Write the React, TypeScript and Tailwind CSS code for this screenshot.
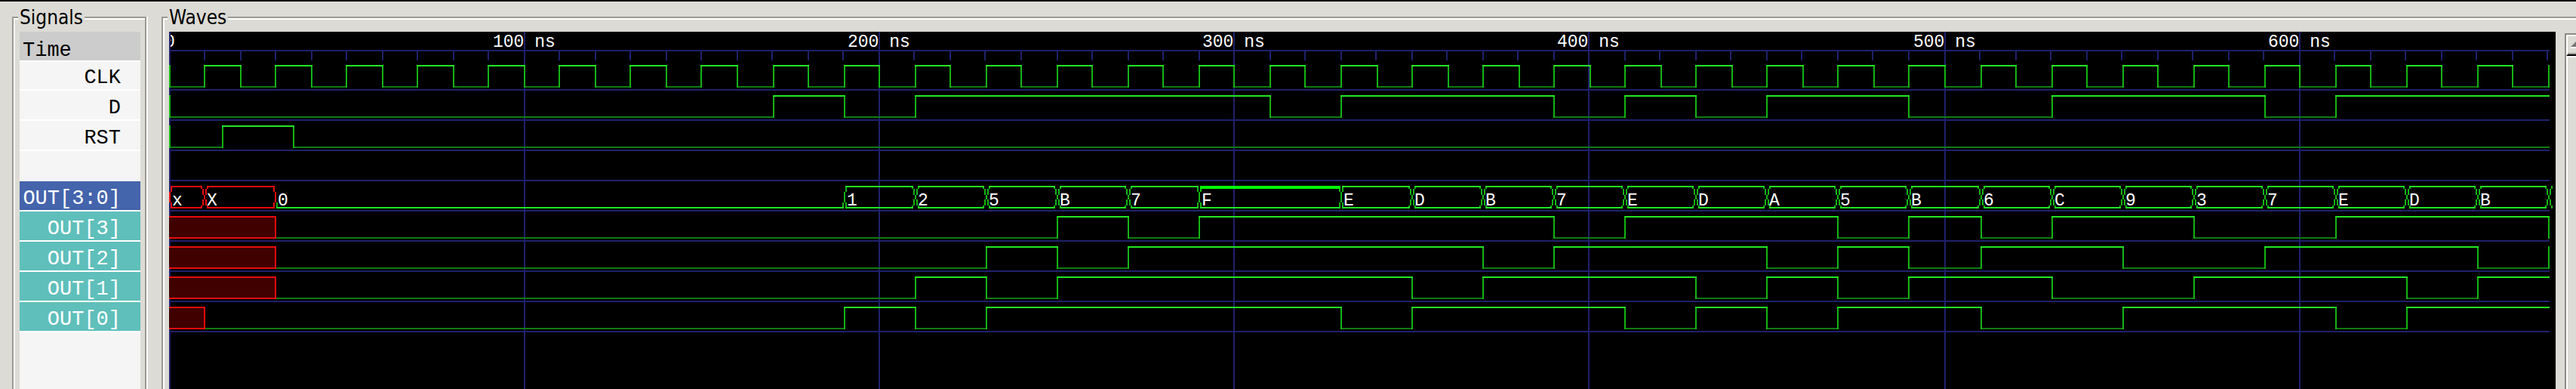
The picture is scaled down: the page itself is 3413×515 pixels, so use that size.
import React from "react";

type Level = 0 | 1;
type Change = [time: number, level: Level];
type BusChange = [time: number, value: string];

const END = 670;
const ROW = 40;
const signalX = (t: number) => 1 + 2 * Math.floor(t * 2.35295);
const tickX = (t: number) => 1 + 2 * Math.floor(t * 2.352);

const clk: Change[] = Array.from({ length: 68 }, (_, i) => [i * 10, (i % 2) as Level]);
const d: Change[] = [
  [0, 0], [170, 1], [190, 0], [210, 1], [310, 0], [330, 1], [390, 0], [410, 1],
  [430, 0], [450, 1], [490, 0], [530, 1], [590, 0], [610, 1],
];
const rst: Change[] = [[0, 0], [15, 1], [35, 0]];

const bus: BusChange[] = [
  [0, "x"], [10, "X"], [30, "0"],
  ...[..."125B7FFEDB7EDA5B6C937EDB7"].map((v, i): BusChange => [190 + i * 20, v]),
].filter((c, i, all) => i === 0 || all[i - 1][1] !== c[1]) as BusChange[];

// Transitions drawn with a tight crossing; the others are two pixels wider on each side.
const tightCrossings = [0, 30, 190, 290, 330];

function bitOf(bit: number, from: number): Change[] {
  const out: Change[] = [[from, 0]];
  for (const [t, v] of bus) {
    if (t < 190) continue;
    const level = ((parseInt(v, 16) >> bit) & 1) as Level;
    if (level !== out[out.length - 1][1]) out.push([t, level]);
  }
  return out;
}

function Wave({ row, changes, start }: { row: number; changes: Change[]; start?: boolean }) {
  const hi = 45 + row * ROW;
  const lo = hi + 28;
  let low = "";
  let high = "";
  let edges = start ? `M1 ${hi - 1}V${lo + 1}` : "";
  changes.forEach(([t, level], i) => {
    const x = signalX(t);
    const next = signalX(i + 1 < changes.length ? changes[i + 1][0] : END);
    if (next > x) {
      const seg = `M${x - 1} ${level ? hi : lo}H${next + 1}`;
      if (level) high += seg;
      else low += seg;
    }
    if (i > 0) edges += `M${x} ${hi - 1}V${lo + 1}`;
  });
  return (
    <g fill="none" strokeWidth={2}>
      <path d={low} stroke="#117a11" />
      <path d={edges} stroke="#14b414" />
      <path d={high} stroke="#22e622" />
    </g>
  );
}

function Unknown({ row, until }: { row: number; until: number }) {
  const x = signalX(until);
  return (
    <path
      d={`M-4 ${45 + row * ROW}H${x}v28H-4z`}
      fill="#400000"
      stroke="#e80c0c"
      strokeWidth={2}
    />
  );
}

// One side of a bus crossing: side is 1 to the right of the edge, -1 to the left.
function strand(t: number, side: 1 | -1, hi: number) {
  const x = signalX(t);
  const near = x + 2 * side;
  const far = x + 4 * side;
  if (tightCrossings.includes(t)) {
    return `M${near} ${hi - 1}v8M${x} ${hi + 7}v14M${near} ${hi + 21}v8`;
  }
  return `M${far} ${hi - 1}v4M${near} ${hi + 3}v8M${x} ${hi + 11}v6M${near} ${hi + 17}v8M${far} ${hi + 25}v4`;
}

function Bus({ row }: { row: number }) {
  const hi = 45 + row * ROW;
  const lo = hi + 28;
  return (
    <g fill="none" strokeWidth={2}>
      {bus.map(([t, v], i) => {
        const last = t >= END;
        const end = last ? t : bus[i + 1][0];
        const x = signalX(t);
        const next = signalX(end);
        const from = x + (tightCrossings.includes(t) ? 1 : 3);
        const to = next - (tightCrossings.includes(end) ? 1 : 3);
        const unknown = v.toLowerCase() === "x";
        const zero = v === "0";
        const line = unknown ? "#e80c0c" : "#22e622";
        const edge = unknown ? "#e80c0c" : "#14b414";
        const opening = zero ? `M${x + 2} ${lo - 7}v8` : strand(t, 1, hi);
        const closing = zero ? `M${next - 2} ${lo - 7}v8` : strand(end, -1, hi);
        return (
          <g key={t}>
            <path d={opening + (last ? "" : closing)} stroke={edge} />
            {!last && <path d={`M${from} ${lo}H${to}`} stroke={line} />}
            {!last && !zero && v !== "F" && <path d={`M${from} ${hi}H${to}`} stroke={line} />}
            {v === "F" && <path d={`M${from} ${hi + 1}H${to}`} stroke="#00ff00" strokeWidth={4} />}
            {!last && (
              <text x={x + 3} y={lo - 3} fill="#ffffff">
                {v}
              </text>
            )}
          </g>
        );
      })}
    </g>
  );
}

function Waveforms() {
  const right = signalX(END) + 1;
  const ticks = Array.from({ length: 67 }, (_, i) => (i + 1) * 10).filter((t) => t % 100 !== 0);
  const marks = [0, 100, 200, 300, 400, 500, 600];
  return (
    <svg
      role="img"
      aria-label="Signal waveforms"
      className="h-full w-full font-['Liberation_Mono',monospace] text-[23px]"
      shapeRendering="crispEdges"
    >
      <g fill="#ffffff">
        {marks.map((t) => (
          <text key={t} x={t === 0 ? -6 : tickX(t) - 42} y={20}>
            {t === 0 ? "0" : `${t} ns`}
          </text>
        ))}
      </g>
      <g stroke="#20206c" strokeWidth={2} fill="none">
        {marks.map((t) => (
          <line key={t} x1={tickX(t)} x2={tickX(t)} y1={0} y2="100%" />
        ))}
        <path d={ticks.map((t) => `M${tickX(t)} 24V38`).join("")} />
        <path d={`M0 25H${right}`} />
        {Array.from({ length: 9 }, (_, i) => (
          <path key={i} d={`M0 ${77 + i * ROW}H${right}`} />
        ))}
      </g>
      <Wave row={0} changes={clk} start />
      <Wave row={1} changes={d} start />
      <Wave row={2} changes={rst} start />
      <Bus row={4} />
      <Wave row={5} changes={bitOf(3, 30)} />
      <Wave row={6} changes={bitOf(2, 30)} />
      <Wave row={7} changes={bitOf(1, 30)} />
      <Wave row={8} changes={bitOf(0, 10)} />
      <Unknown row={5} until={30} />
      <Unknown row={6} until={30} />
      <Unknown row={7} until={30} />
      <Unknown row={8} until={10} />
    </svg>
  );
}

const plain = "h-10 pt-1 bg-[#f5f5f5] text-black";
const teal = "h-10 pt-1 bg-[#5fbfbb] text-white";
const rows = [
  { name: "CLK", style: "h-[38px] pt-0.5 bg-[#f5f5f5] text-black" },
  { name: "D", style: plain },
  { name: "RST", style: plain },
  { name: "", style: plain },
  { name: "OUT[3:0]", style: "h-10 pt-1 bg-[#4464ac] text-white" },
  { name: "OUT[3]", style: teal },
  { name: "OUT[2]", style: teal },
  { name: "OUT[1]", style: teal },
  { name: "OUT[0]", style: teal },
];

const frame = "flex flex-col border-2 border-b-0 border-[#9a9a94]";
const frameInner = "flex min-h-0 flex-1 flex-col border-t-2 border-l-2 border-white pl-1.5";
const title = "-mt-4 -ml-0.5 h-8 self-start bg-[#dcdbd5] px-0.5 text-[26px] leading-[26px]";

export default function App() {
  return (
    <main className="flex h-screen min-h-[460px] overflow-hidden border-t-2 border-black bg-[#dcdbd5] pl-4 font-['DejaVu_Sans_Condensed','DejaVu_Sans',sans-serif] text-black">
      <section className="mt-5 mr-[18px] flex shrink-0 border-r-2 border-white">
        <div className={frame}>
          <div className={`${frameInner} pr-1.5`}>
            <h2 className={title}>Signals</h2>
            <div className="flex w-40 flex-1 flex-col bg-[#f5f5f5] font-['Liberation_Mono',monospace] text-[27px] leading-[38px]">
              <div className="h-10 border-b-2 border-white bg-[#cccccc] pt-1.5 pl-1">Time</div>
              <ul>
                {rows.map((r, i) => (
                  <li key={i} className={`border-b-2 border-white pr-[26px] text-right ${r.style}`}>
                    {r.name}
                  </li>
                ))}
              </ul>
            </div>
          </div>
        </div>
      </section>
      <section className={`${frame} mt-5 min-w-0 flex-1 border-r-0`}>
        <div className={frameInner}>
          <h2 className={title}>Waves</h2>
          <div className="flex min-h-0 flex-1">
            <div className="min-w-0 flex-1 overflow-hidden bg-black">
              <Waveforms />
            </div>
            <div className="mt-0.5 ml-3 flex w-[15px] flex-col overflow-hidden border-t-2 border-l-2 border-[#8c8c86]">
              <button
                type="button"
                aria-label="Scroll up"
                className="h-7 w-7 shrink-0 border-t-2 border-b-2 border-l-2 border-t-white border-b-black border-l-white"
              >
                <svg viewBox="0 0 24 24" className="h-6 w-6">
                  <path d="M4 14L12 6l8 8z" fill="#777" />
                  <path d="M4 15h16" stroke="#fff" strokeWidth={2} />
                  <path d="M0 23h24" stroke="#9a9a94" strokeWidth={2} />
                </svg>
              </button>
              <div className="w-7 flex-1 border-t-2 border-l-2 border-white" />
            </div>
          </div>
        </div>
      </section>
    </main>
  );
}
